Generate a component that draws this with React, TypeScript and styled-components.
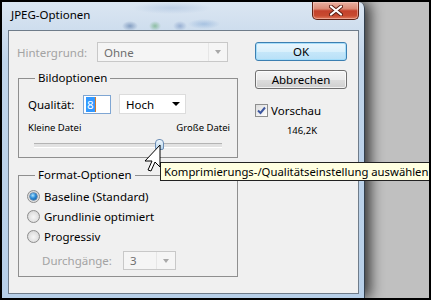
import React from "react";
import styled, { createGlobalStyle } from "styled-components";

const Global = createGlobalStyle`
  html, body { margin: 0; padding: 0; background: #c0c0c0; }
  body { font-family: "Noto Sans", "Liberation Sans", sans-serif; font-size: 11px; color: #000; }
  * { box-sizing: border-box; }
`;

const Screen = styled.div`
  position: relative;
  width: 431px;
  height: 300px;
  border: 2px solid #000;
  background: #c0c0c0;
  display: flex;
  align-items: flex-start;
  overflow: hidden;
`;

const Window = styled.div`
  width: 363px;
  height: 296px;
  flex: none;
  display: flex;
  flex-direction: column;
  border-right: 1px solid #33404e;
  border-radius: 0 6px 0 0;
  background: linear-gradient(to bottom, #dbe6f2 0px, #cfdeee 26px, #bfd4ea 60px, #b7cfe8 100%);
  box-shadow: 5px 0 14px rgba(0, 0, 0, 0.75);
`;

const TitleBar = styled.div`
  height: 28px;
  flex: none;
  display: flex;
  align-items: flex-start;
  padding-left: 9px;
  background:
    radial-gradient(ellipse 8px 5px at 128px 24px, rgba(40, 80, 140, 0.45), transparent),
    radial-gradient(ellipse 6px 5px at 153px 24px, rgba(60, 150, 70, 0.45), transparent),
    radial-gradient(ellipse 7px 5px at 178px 24px, rgba(50, 90, 160, 0.35), transparent),
    radial-gradient(ellipse 16px 5px at 202px 22px, rgba(90, 140, 200, 0.35), transparent),
    radial-gradient(ellipse 40px 6px at 170px 6px, rgba(140, 170, 210, 0.35), transparent);
`;

const Title = styled.span`
  padding-top: 5px;
  line-height: 16px;
  font-size: 11.5px;
  color: #000;
`;

const CloseButton = styled.div`
  margin-left: auto;
  margin-right: 5px;
  width: 47px;
  height: 18px;
  display: flex;
  align-items: center;
  justify-content: center;
  border: 1px solid #5e2014;
  border-top: none;
  border-radius: 0 0 5px 5px;
  background: linear-gradient(to bottom, #eab1a2 0%, #dc8a75 40%, #c4412c 52%, #c84a30 80%, #e07a5e 100%);
  box-shadow: inset 0 0 0 1px rgba(255, 220, 210, 0.45);
`;

const Client = styled.div`
  flex: 1;
  margin: 0 5px 4px 6px;
  border: 1px solid #6f7c8a;
  background: #f0f0f0;
  display: flex;
  align-items: flex-start;
  padding: 11px 0 0 9px;
`;

const LeftCol = styled.div`
  width: 220px;
  flex: none;
  display: flex;
  flex-direction: column;
`;

const RightCol = styled.div`
  width: 92px;
  flex: none;
  margin-left: 17px;
  display: flex;
  flex-direction: column;
`;

const Row = styled.div<{ $indent?: number; $mt?: number; $h?: number }>`
  display: flex;
  align-items: center;
  height: ${(p) => p.$h ?? 20}px;
  margin-left: ${(p) => p.$indent ?? 0}px;
  margin-top: ${(p) => p.$mt ?? 0}px;
`;

const Label = styled.span<{ $w?: number; $disabled?: boolean }>`
  flex: none;
  width: ${(p) => (p.$w ? `${p.$w}px` : "auto")};
  font-size: 11.5px;
  color: ${(p) => (p.$disabled ? "#a3a3a3" : "#000")};
  white-space: nowrap;
`;

const Select = styled.div<{ $w: number; $h: number; $disabled?: boolean }>`
  flex: none;
  width: ${(p) => p.$w}px;
  height: ${(p) => p.$h}px;
  display: flex;
  align-items: center;
  padding-left: 6px;
  font-size: 11.5px;
  border: 1px solid ${(p) => (p.$disabled ? "#c8c8c8" : "#dcdcdc")};
  background: ${(p) => (p.$disabled ? "#f5f5f5" : "#fff")};
  color: ${(p) => (p.$disabled ? "#6f6f6f" : "#000")};
`;

const ArrowBox = styled.span<{ $disabled?: boolean }>`
  margin-left: auto;
  width: 19px;
  align-self: stretch;
  display: flex;
  align-items: center;
  justify-content: center;
  border-left: 1px solid ${(p) => (p.$disabled ? "#e6e6e6" : "transparent")};
`;

const Arrow = styled.span<{ $disabled?: boolean }>`
  width: 0;
  height: 0;
  border-left: ${(p) => (p.$disabled ? 3.5 : 4)}px solid transparent;
  border-right: ${(p) => (p.$disabled ? 3.5 : 4)}px solid transparent;
  border-top: 4px solid ${(p) => (p.$disabled ? "#a8a8a8" : "#000")};
`;

const Group = styled.fieldset<{ $mt: number }>`
  margin: ${(p) => p.$mt}px 0 0 0;
  padding: 0;
  border: 1px solid #8f8f8f;
  min-width: 0;
`;

const Legend = styled.legend`
  margin-left: 16px;
  padding: 0 3px;
  font-size: 11.5px;
  line-height: 16px;
  color: #000;
`;

const TextInput = styled.div`
  flex: none;
  width: 28px;
  height: 19px;
  border: 1px solid #7fa6d3;
  background: #fff;
  display: flex;
  align-items: center;
  padding-left: 2px;
  font-size: 11.5px;
`;

const Selected = styled.span`
  background: #3399ff;
  color: #fff;
  line-height: 15px;
  padding: 0 1px;
  border-right: 1px solid #d27a2c;
`;

const SizeLabels = styled.div`
  display: flex;
  justify-content: space-between;
  margin: 8px 7px 0 9px;
  height: 12px;
  line-height: 12px;
  font-size: 9.5px;
  color: #000;
`;

const Slider = styled.div`
  position: relative;
  width: 188px;
  height: 12px;
  margin: 4px 0 7px 15px;
  &::before {
    content: "";
    position: absolute;
    left: 0;
    right: 0;
    top: 5px;
    height: 3px;
    border-top: 1px solid #b4b4b4;
    border-bottom: 1px solid #ffffff;
    background: #e2e2e2;
  }
`;

const Thumb = styled.span`
  position: absolute;
  top: 1px;
  width: 9px;
  height: 11px;
  border: 1px solid #6b8db5;
  border-radius: 4px 4px 2px 2px;
  background: linear-gradient(to bottom, #f1f8fd, #b4d3ec);
`;

const Radio = styled.span<{ $checked?: boolean }>`
  flex: none;
  width: 13px;
  height: 13px;
  border-radius: 50%;
  border: 1px solid #8d8d8d;
  background: radial-gradient(circle at 50% 55%, #f6f6f6 0%, #e2e2e2 55%, #cacaca 100%);
  display: flex;
  align-items: center;
  justify-content: center;
  &::after {
    content: "";
    display: ${(p) => (p.$checked ? "block" : "none")};
    width: 7px;
    height: 7px;
    border-radius: 50%;
    background: radial-gradient(circle at 40% 35%, #aee6ff 0%, #2b8ad6 45%, #0b4b8c 100%);
    box-shadow: 0 0 0 0.5px #1d4f80;
  }
`;

const RadioText = styled.span`
  margin-left: 4px;
  font-size: 11.5px;
  color: #000;
  white-space: nowrap;
`;

const Button = styled.div<{ $default?: boolean; $mt?: number }>`
  height: 19px;
  margin-top: ${(p) => p.$mt ?? 0}px;
  display: flex;
  align-items: center;
  justify-content: center;
  font-size: 11.5px;
  color: #000;
  border-radius: 3px;
  border: 1px solid ${(p) => (p.$default ? "#3c7fb1" : "#707070")};
  background: ${(p) =>
    p.$default
      ? "linear-gradient(to bottom, #eaf6fd 0%, #d9f0fc 50%, #c6e7fa 51%, #b8e0f7 100%)"
      : "linear-gradient(to bottom, #f4f4f4 0%, #ebebeb 50%, #dddddd 51%, #cfcfcf 100%)"};
  box-shadow: inset 0 0 0 1px ${(p) => (p.$default ? "rgba(160,220,250,0.9)" : "rgba(255,255,255,0.7)")};
`;

const CheckRow = styled.div`
  display: flex;
  align-items: center;
  margin-top: 14px;
  height: 14px;
`;

const CheckBox = styled.span`
  flex: none;
  width: 13px;
  height: 13px;
  border: 1px solid #8e8f8f;
  background: linear-gradient(to bottom right, #dcdcdc, #ffffff);
  display: flex;
  align-items: center;
  justify-content: center;
`;

const CheckText = styled.span`
  margin-left: 3px;
  font-size: 11.5px;
`;

const SizeInfo = styled.div`
  margin-top: 8px;
  text-align: center;
  font-size: 9.5px;
  line-height: 12px;
  padding-left: 2px;
`;

const Tooltip = styled.div`
  position: absolute;
  left: 158px;
  top: 160px;
  width: 270px;
  height: 19px;
  border: 1px solid #222;
  background: #ffffe1;
  font-size: 11.3px;
  line-height: 17px;
  padding-left: 3px;
  white-space: nowrap;
  overflow: hidden;
  color: #000;
`;

const Cursor = styled.svg`
  position: absolute;
  left: 140px;
  top: 142px;
`;

const quality = 8;
const maxQuality = 12;

export default function App() {
  return (
    <>
      <Global />
      <Screen>
        <Window>
          <TitleBar>
            <Title>JPEG-Optionen</Title>
            <CloseButton>
              <svg width="14" height="11" viewBox="0 0 14 11">
                <path d="M2 1.5 L12 9.5 M12 1.5 L2 9.5" stroke="#5a1d12" strokeWidth="4" strokeLinecap="round" />
                <path d="M2 1.5 L12 9.5 M12 1.5 L2 9.5" stroke="#ffffff" strokeWidth="2.2" strokeLinecap="round" />
              </svg>
            </CloseButton>
          </TitleBar>
          <Client>
            <LeftCol>
              <Row $indent={-1}>
                <Label $w={80} $disabled>Hintergrund:</Label>
                <Select $w={131} $h={20} $disabled>
                  Ohne
                  <ArrowBox $disabled>
                    <Arrow $disabled />
                  </ArrowBox>
                </Select>
              </Row>
              <Group $mt={8}>
                <Legend>Bildoptionen</Legend>
                <Row $indent={9} $mt={8}>
                  <Label $w={55}>Qualität:</Label>
                  <TextInput>
                    <Selected>{quality}</Selected>
                  </TextInput>
                  <Select $w={67} $h={20} style={{ marginLeft: 8 }}>
                    Hoch
                    <ArrowBox>
                      <Arrow />
                    </ArrowBox>
                  </Select>
                </Row>
                <SizeLabels>
                  <span>Kleine Datei</span>
                  <span>Große Datei</span>
                </SizeLabels>
                <Slider>
                  <Thumb style={{ left: Math.round((quality / maxQuality) * 179) + 2 }} />
                </Slider>
              </Group>
              <Group $mt={9}>
                <Legend>Format-Optionen</Legend>
                <Row $indent={8} $mt={3}>
                  <Radio $checked />
                  <RadioText>Baseline (Standard)</RadioText>
                </Row>
                <Row $indent={8}>
                  <Radio />
                  <RadioText>Grundlinie optimiert</RadioText>
                </Row>
                <Row $indent={8}>
                  <Radio />
                  <RadioText>Progressiv</RadioText>
                </Row>
                <Row $indent={23} $mt={5} $h={19} style={{ marginBottom: 6 }}>
                  <Label $w={81} $disabled>Durchgänge:</Label>
                  <Select $w={53} $h={19} $disabled>
                    3
                    <ArrowBox $disabled>
                      <Arrow $disabled />
                    </ArrowBox>
                  </Select>
                </Row>
              </Group>
            </LeftCol>
            <RightCol>
              <Button $default>OK</Button>
              <Button $mt={9}>Abbrechen</Button>
              <CheckRow>
                <CheckBox>
                  <svg width="9" height="9" viewBox="0 0 9 9">
                    <path d="M1 4.5 L3.5 7 L8 1.5" stroke="#3d57a0" strokeWidth="2" fill="none" />
                  </svg>
                </CheckBox>
                <CheckText>Vorschau</CheckText>
              </CheckRow>
              <SizeInfo>146,2K</SizeInfo>
            </RightCol>
          </Client>
        </Window>
        <Tooltip>Komprimierungs-/Qualitätseinstellung auswählen</Tooltip>
        <Cursor width="20" height="30" viewBox="0 0 20 30">
          <path
            d="M18 1 L18 23 L13 18 L9 27 L6 26 L10 17 L3 17 Z"
            fill="#ffffff"
            stroke="#000000"
            strokeWidth="1"
            strokeLinejoin="miter"
          />
        </Cursor>
      </Screen>
    </>
  );
}
